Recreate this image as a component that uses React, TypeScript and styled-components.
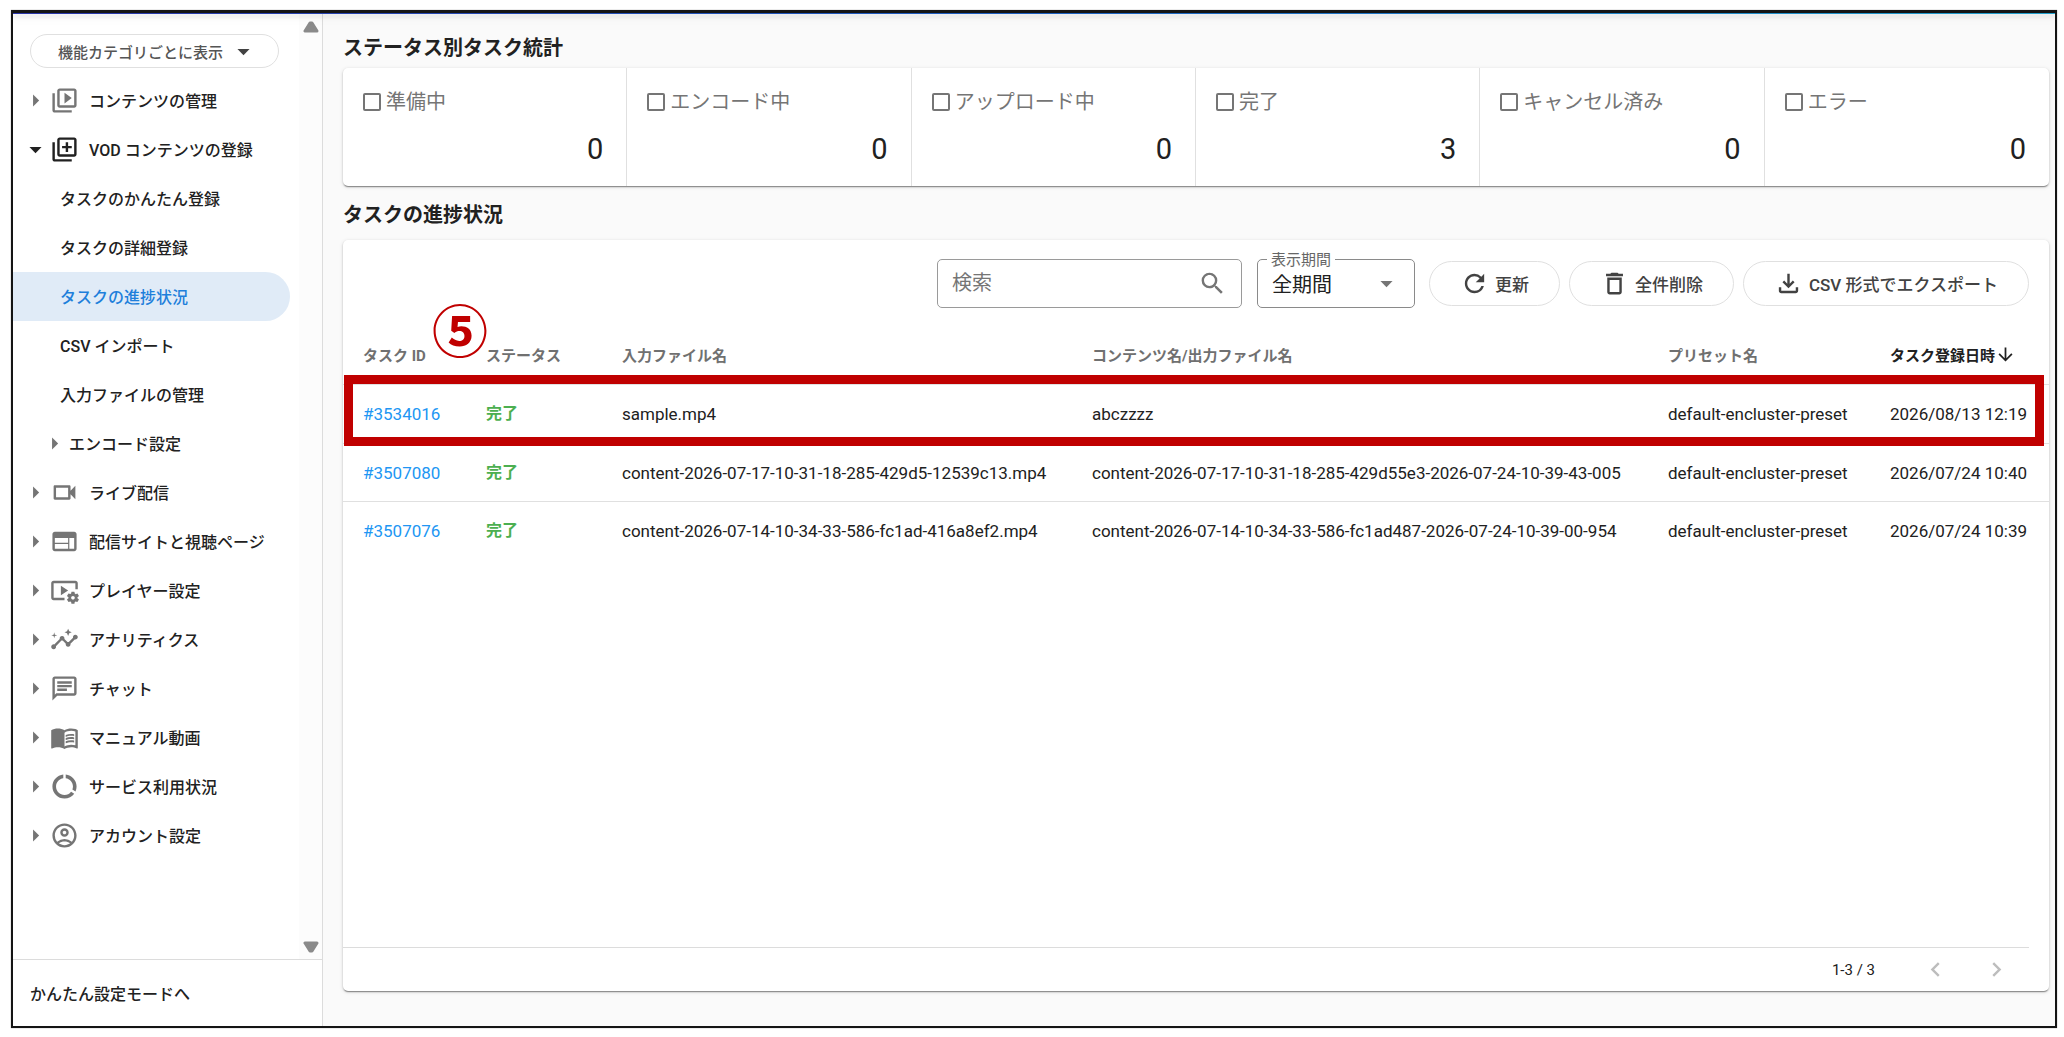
import React from "react";
import styled, { createGlobalStyle, css } from "styled-components";
import type { IconType } from "react-icons";
import {
  MdArrowDownward,
  MdArrowDropDown,
  MdArrowRight,
  MdChevronLeft,
  MdChevronRight,
  MdDataUsage,
  MdInsights,
  MdMenuBook,
  MdOutlineAccountCircle,
  MdOutlineChat,
  MdOutlineDelete,
  MdOutlineFileDownload,
  MdOutlineLibraryAdd,
  MdOutlineVideoLibrary,
  MdOutlineVideocam,
  MdRefresh,
  MdSearch,
  MdVideoSettings,
  MdWeb,
} from "react-icons/md";

const GlobalStyle = createGlobalStyle`
  * { box-sizing: border-box; }
  body {
    margin: 0;
    background: #fff;
    color: #212121;
    font-family: Roboto, "Noto Sans CJK JP", sans-serif;
    font-size: 16px;
  }
  button, input, select { font-family: inherit; }
`;

const Page = styled.div`
  display: flex;
  min-height: 100vh;
  padding: 10px 7px 9px 11px;
`;

const Frame = styled.div`
  flex: 1;
  display: flex;
  flex-direction: column;
  min-width: 0;
  border: 2px solid #141414;
  border-top-width: 3px;
  box-shadow: 0 0 1px #8a8a8a;
`;

const AppBarEdge = styled.div`
  position: relative;
  z-index: 1;
  height: 1px;
  background: linear-gradient(90deg, #2a35a8, #1c5fc0 50%, #22a0cc);
  box-shadow: 0 2px 4px rgba(0, 0, 0, 0.25), 0 4px 10px rgba(0, 0, 0, 0.14);
  clip-path: inset(0 0 -30px 0);
`;

const Columns = styled.div`
  flex: 1;
  display: flex;
  min-height: 0;
`;

/* Sidebar */

const Sidebar = styled.aside`
  flex: none;
  width: 310px;
  display: flex;
  flex-direction: column;
  border-right: 1px solid #dcdcdc;
`;

const SidebarScroll = styled.div`
  flex: 1;
  display: flex;
`;

const Nav = styled.nav`
  flex: 1;
  padding-top: 20px;
`;

const CategoryButton = styled.button`
  display: flex;
  align-items: center;
  justify-content: flex-end;
  gap: 6px;
  width: 249px;
  height: 34px;
  margin: 0 0 8px 17px;
  padding: 0 20px 0 0;
  border: 1px solid #e0e0e0;
  border-radius: 17px;
  background: #fff;
  color: #555;
  font-size: 15px;
  font-weight: 500;

  svg { color: #424242; }
`;

const NavList = styled.ul`
  margin: 0;
  padding: 0;
  list-style: none;
`;

const indents = { category: 8, group: 27, leaf: 47 };

const NavLink = styled.a<{ $level: keyof typeof indents; $open?: boolean; $active?: boolean }>`
  display: flex;
  align-items: center;
  height: 49px;
  margin-right: 9px;
  padding-left: ${(p) => indents[p.$level]}px;
  border-radius: 0 25px 25px 0;
  color: #212121;
  font-weight: 500;
  white-space: nowrap;
  text-decoration: none;

  svg {
    flex: none;
    color: ${(p) => (p.$open ? "#212121" : "#757575")};
  }

  ${(p) =>
    p.$active &&
    css`
      background: #e0ebf7;
      color: #1e7fdb;
    `}
`;

const NavText = styled.span<{ $gap?: boolean }>`
  margin-left: ${(p) => (p.$gap ? 10 : 0)}px;
  padding-bottom: 2px;
`;

const ScrollTrack = styled.div`
  flex: none;
  width: 23px;
  display: flex;
  flex-direction: column;
  align-items: center;
  justify-content: space-between;
  padding: 7px 0 6px;
  background: #fcfcfc;
`;

const SidebarFooter = styled.div`
  display: flex;
  align-items: center;
  height: 67px;
  padding: 0 17px;
  border-top: 1px solid #dcdcdc;
`;

const ModeLink = styled.a`
  color: #212121;
  font-weight: 500;
  text-decoration: none;
`;

/* Main area */

const Main = styled.main`
  flex: 1;
  min-width: 0;
  display: flex;
  flex-direction: column;
  padding: 20px 6px 35px 20px;
  background: #fafafa;
`;

const Heading = styled.h2`
  margin: 0 0 6px;
  font-size: 20px;
  font-weight: 700;
  line-height: 28px;
`;

const ListHeading = styled(Heading)`
  margin: 15px 0 11px;
`;

const card = css`
  border-radius: 5px;
  background: #fff;
  box-shadow: 0 2px 1px -1px rgba(0, 0, 0, 0.3), 0 1px 2px rgba(0, 0, 0, 0.2),
    0 1px 4px rgba(0, 0, 0, 0.12);
`;

const Stats = styled.section`
  ${card}
  display: grid;
  grid-template-columns: repeat(6, 1fr);
`;

const Stat = styled.div`
  display: flex;
  flex-direction: column;
  gap: 15px;
  padding: 20px 23px 19px 20px;

  &:not(:last-child) { border-right: 1px solid #e0e0e0; }
`;

const StatLabel = styled.label`
  display: flex;
  align-items: center;
  gap: 5px;
  color: #757575;
  font-size: 20px;
  line-height: 28px;
  white-space: nowrap;
`;

const StatCheck = styled.input`
  appearance: none;
  width: 18px;
  height: 18px;
  margin: 0;
  border: 2px solid #757575;
  border-radius: 2px;

  &:checked { background: #757575; }
`;

const StatValue = styled.div`
  font-size: 29px;
  line-height: 36px;
  text-align: right;
`;

const Panel = styled.section`
  ${card}
  position: relative;
  flex: 1;
  display: flex;
  flex-direction: column;
`;

const Toolbar = styled.div`
  display: flex;
  align-items: center;
  justify-content: flex-end;
  gap: 9px;
  padding: 19px 20px 18px;
`;

const SearchBox = styled.label`
  display: flex;
  align-items: center;
  width: 305px;
  height: 49px;
  margin-right: 6px;
  padding: 0 14px;
  border: 1px solid #9a9a9a;
  border-radius: 5px;
  color: #757575;
`;

const SearchInput = styled.input`
  flex: 1;
  min-width: 0;
  padding: 0 0 2px;
  border: 0;
  outline: 0;
  background: transparent;
  font-size: 20px;

  &::placeholder { color: #757575; opacity: 1; }
`;

const PeriodBox = styled.div`
  position: relative;
  width: 158px;
  margin-right: 5px;

  svg {
    position: absolute;
    top: 10px;
    right: 14px;
    color: #757575;
    pointer-events: none;
  }
`;

const PeriodLabel = styled.label`
  position: absolute;
  top: -9px;
  left: 10px;
  padding: 0 4px;
  background: #fff;
  color: #666;
  font-size: 15px;
  line-height: 20px;
`;

const PeriodSelect = styled.select`
  appearance: none;
  display: block;
  width: 100%;
  height: 49px;
  padding: 3px 14px 0;
  border: 1px solid #8a8a8a;
  border-radius: 5px;
  background: #fff;
  color: #212121;
  font-size: 20px;
`;

const PillButton = styled.button`
  display: flex;
  align-items: center;
  gap: 6px;
  height: 45px;
  padding: 0 30px;
  border: 1px solid #e0e0e0;
  border-radius: 23px;
  background: #fff;
  color: #424242;
  font-size: 17px;
  font-weight: 500;
  white-space: nowrap;
`;

const Table = styled.table`
  width: 100%;
  table-layout: fixed;
  border-collapse: separate;
  border-spacing: 0;
`;

const Col = styled.col<{ $width?: number }>`
  width: ${(p) => (p.$width ? `${p.$width}px` : "auto")};
`;

const HeadCell = styled.th<{ $sorted?: boolean }>`
  height: 59px;
  padding: 0 0 2px 20px;
  border-bottom: 1px solid #e0e0e0;
  color: ${(p) => (p.$sorted ? "#212121" : "#707070")};
  font-size: 15px;
  font-weight: 700;
  text-align: left;
  white-space: nowrap;
`;

const SortButton = styled.button`
  display: flex;
  align-items: center;
  padding: 0;
  border: 0;
  background: none;
  color: inherit;
  font-size: 15px;
  font-weight: 700;
`;

const Row = styled.tr`
  & + & td { border-top: 1px solid #e0e0e0; }
`;

const Cell = styled.td`
  height: 58px;
  padding: 0 0 0 20px;
  font-size: 17px;
  white-space: nowrap;
`;

const TaskLink = styled.a`
  color: #2196f3;
  text-decoration: none;
`;

const Status = styled.span`
  display: block;
  padding-bottom: 4px;
  color: #4caf50;
  font-size: 16px;
  font-weight: 700;
`;

const Pager = styled.footer`
  display: flex;
  align-items: center;
  justify-content: flex-end;
  height: 44px;
  margin: auto 20px 0 0;
  border-top: 1px solid #dcdcdc;
  font-size: 15px;
`;

const PagerButtons = styled.div`
  display: flex;
  gap: 32px;
  margin: 0 18px 0 46px;
`;

const PagerButton = styled.button`
  display: flex;
  padding: 0;
  border: 0;
  background: none;
  color: #bdbdbd;
`;

/* Annotation laid over the table */

const HighlightFrame = styled.div`
  position: absolute;
  top: 135px;
  left: 1px;
  right: 5px;
  height: 71px;
  border: 9px solid #c00000;
  pointer-events: none;
`;

const HighlightNumber = styled.span`
  position: absolute;
  top: 58px;
  left: 89px;
  color: #c00000;
  font-family: "Noto Sans CJK JP", sans-serif;
  font-size: 56px;
  font-weight: 700;
  line-height: 60px;
`;

type NavItem = {
  text: string;
  level: keyof typeof indents;
  icon?: IconType;
  open?: boolean;
  active?: boolean;
};

const navItems: NavItem[] = [
  { text: "コンテンツの管理", level: "category", icon: MdOutlineVideoLibrary },
  { text: "VOD コンテンツの登録", level: "category", icon: MdOutlineLibraryAdd, open: true },
  { text: "タスクのかんたん登録", level: "leaf" },
  { text: "タスクの詳細登録", level: "leaf" },
  { text: "タスクの進捗状況", level: "leaf", active: true },
  { text: "CSV インポート", level: "leaf" },
  { text: "入力ファイルの管理", level: "leaf" },
  { text: "エンコード設定", level: "group" },
  { text: "ライブ配信", level: "category", icon: MdOutlineVideocam },
  { text: "配信サイトと視聴ページ", level: "category", icon: MdWeb },
  { text: "プレイヤー設定", level: "category", icon: MdVideoSettings },
  { text: "アナリティクス", level: "category", icon: MdInsights },
  { text: "チャット", level: "category", icon: MdOutlineChat },
  { text: "マニュアル動画", level: "category", icon: MdMenuBook },
  { text: "サービス利用状況", level: "category", icon: MdDataUsage },
  { text: "アカウント設定", level: "category", icon: MdOutlineAccountCircle },
];

const stats = [
  { label: "準備中", value: 0 },
  { label: "エンコード中", value: 0 },
  { label: "アップロード中", value: 0 },
  { label: "完了", value: 3 },
  { label: "キャンセル済み", value: 0 },
  { label: "エラー", value: 0 },
];

const tasks = [
  {
    id: "#3534016",
    input: "sample.mp4",
    output: "abczzzz",
    date: "2026/08/13 12:19",
  },
  {
    id: "#3507080",
    input: "content-2026-07-17-10-31-18-285-429d5-12539c13.mp4",
    output: "content-2026-07-17-10-31-18-285-429d55e3-2026-07-24-10-39-43-005",
    date: "2026/07/24 10:40",
  },
  {
    id: "#3507076",
    input: "content-2026-07-14-10-34-33-586-fc1ad-416a8ef2.mp4",
    output: "content-2026-07-14-10-34-33-586-fc1ad487-2026-07-24-10-39-00-954",
    date: "2026/07/24 10:39",
  },
];

const ICON = 29;

function ScrollArrow({ down }: { down?: boolean }) {
  return (
    <svg width="16" height="12" viewBox="0 0 16 12" aria-hidden="true">
      <path
        d={down ? "M2 2h12L9 10H7z" : "M2 10h12L9 2H7z"}
        fill="#8a8a8a"
        stroke="#8a8a8a"
        strokeWidth="3"
        strokeLinejoin="round"
      />
    </svg>
  );
}

function SideNav() {
  return (
    <Sidebar>
      <SidebarScroll>
        <Nav>
          <CategoryButton type="button">
            機能カテゴリごとに表示
            <MdArrowDropDown size={ICON} />
          </CategoryButton>
          <NavList>
            {navItems.map(({ text, level, icon: Icon, open, active }) => (
              <li key={text}>
                <NavLink href="#" $level={level} $open={open} $active={active}>
                  {level !== "leaf" &&
                    (open ? <MdArrowDropDown size={ICON} /> : <MdArrowRight size={ICON} />)}
                  {Icon && <Icon size={ICON} />}
                  <NavText $gap={!!Icon}>{text}</NavText>
                </NavLink>
              </li>
            ))}
          </NavList>
        </Nav>
        <ScrollTrack>
          <ScrollArrow />
          <ScrollArrow down />
        </ScrollTrack>
      </SidebarScroll>
      <SidebarFooter>
        <ModeLink href="#">かんたん設定モードへ</ModeLink>
      </SidebarFooter>
    </Sidebar>
  );
}

function TaskTable() {
  return (
    <Table>
      <colgroup>
        <Col $width={123} />
        <Col $width={136} />
        <Col $width={470} />
        <Col />
        <Col $width={222} />
        <Col $width={179} />
      </colgroup>
      <thead>
        <tr>
          <HeadCell>タスク ID</HeadCell>
          <HeadCell>ステータス</HeadCell>
          <HeadCell>入力ファイル名</HeadCell>
          <HeadCell>コンテンツ名/出力ファイル名</HeadCell>
          <HeadCell>プリセット名</HeadCell>
          <HeadCell $sorted aria-sort="descending">
            <SortButton type="button">
              タスク登録日時
              <MdArrowDownward size={21} />
            </SortButton>
          </HeadCell>
        </tr>
      </thead>
      <tbody>
        {tasks.map((task) => (
          <Row key={task.id}>
            <Cell>
              <TaskLink href="#">{task.id}</TaskLink>
            </Cell>
            <Cell>
              <Status>完了</Status>
            </Cell>
            <Cell>{task.input}</Cell>
            <Cell>{task.output}</Cell>
            <Cell>default-encluster-preset</Cell>
            <Cell>{task.date}</Cell>
          </Row>
        ))}
      </tbody>
    </Table>
  );
}

export default function App() {
  return (
    <>
      <GlobalStyle />
      <Page>
        <Frame>
          <AppBarEdge />
          <Columns>
            <SideNav />
            <Main>
              <Heading>ステータス別タスク統計</Heading>
              <Stats>
                {stats.map((stat) => (
                  <Stat key={stat.label}>
                    <StatLabel>
                      <StatCheck type="checkbox" />
                      {stat.label}
                    </StatLabel>
                    <StatValue>{stat.value}</StatValue>
                  </Stat>
                ))}
              </Stats>
              <ListHeading>タスクの進捗状況</ListHeading>
              <Panel>
                <Toolbar>
                  <SearchBox>
                    <SearchInput type="text" placeholder="検索" aria-label="検索" />
                    <MdSearch size={ICON} />
                  </SearchBox>
                  <PeriodBox>
                    <PeriodSelect id="period" defaultValue="all">
                      <option value="all">全期間</option>
                    </PeriodSelect>
                    <PeriodLabel htmlFor="period">表示期間</PeriodLabel>
                    <MdArrowDropDown size={ICON} />
                  </PeriodBox>
                  <PillButton type="button">
                    <MdRefresh size={ICON} />
                    更新
                  </PillButton>
                  <PillButton type="button">
                    <MdOutlineDelete size={ICON} />
                    全件削除
                  </PillButton>
                  <PillButton type="button">
                    <MdOutlineFileDownload size={ICON} />
                    CSV 形式でエクスポート
                  </PillButton>
                </Toolbar>
                <TaskTable />
                <Pager>
                  1-3 / 3
                  <PagerButtons>
                    <PagerButton type="button" aria-label="前のページ">
                      <MdChevronLeft size={ICON} />
                    </PagerButton>
                    <PagerButton type="button" aria-label="次のページ">
                      <MdChevronRight size={ICON} />
                    </PagerButton>
                  </PagerButtons>
                </Pager>
                <HighlightFrame />
                <HighlightNumber>⑤</HighlightNumber>
              </Panel>
            </Main>
          </Columns>
        </Frame>
      </Page>
    </>
  );
}
